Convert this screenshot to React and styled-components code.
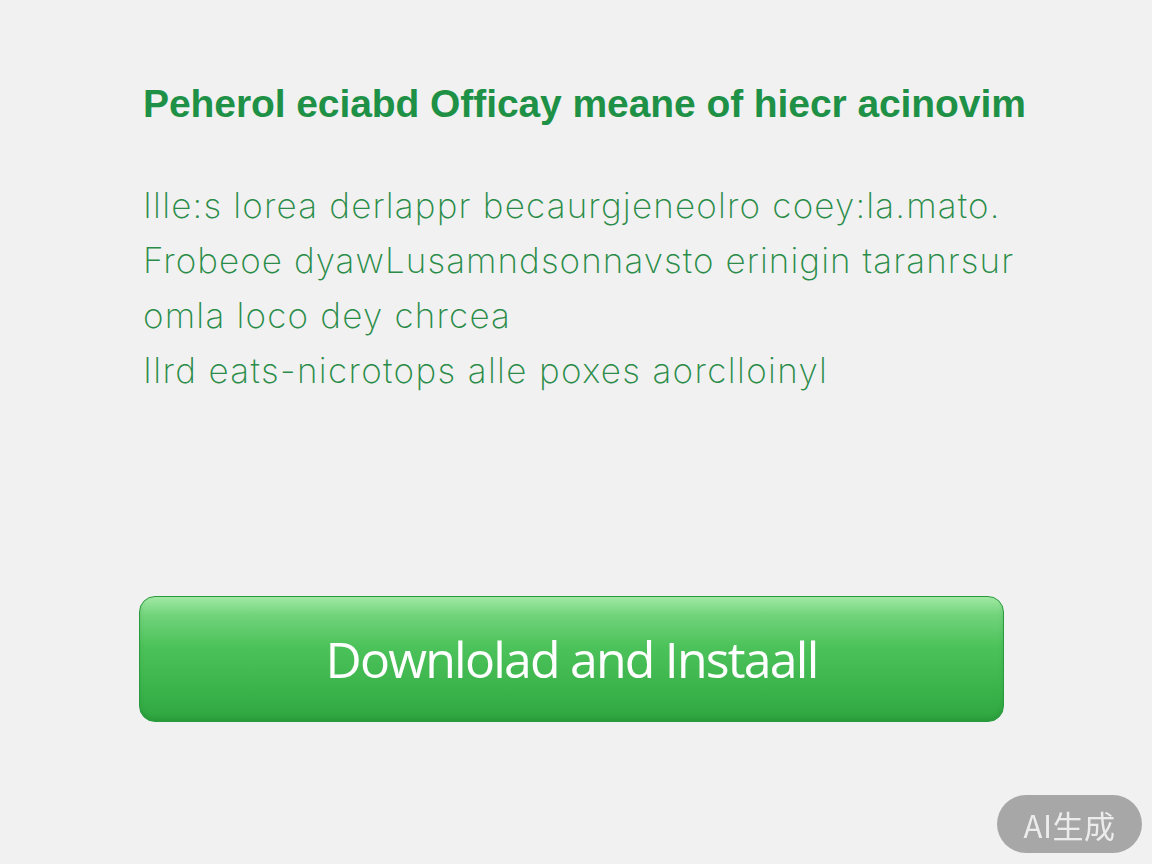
import React from 'react';
import styled, { createGlobalStyle } from 'styled-components';

const Global = createGlobalStyle`
  html, body {
    margin: 0;
    padding: 0;
    background: #f1f1f1;
  }
  #root {
    min-height: 864px;
  }
`;

const Page = styled.main`
  display: flex;
  flex-direction: column;
  height: 864px;
  padding: 78px 0 0 143px;
  box-sizing: border-box;
  background: #f1f1f1;
`;

const Title = styled.h1`
  margin: 0;
  font-family: "Liberation Sans", Arial, sans-serif;
  font-weight: 700;
  font-size: 39px;
  line-height: 52px;
  color: #1e9147;
  letter-spacing: -0.08px;
  white-space: nowrap;
`;

const Body = styled.div`
  display: flex;
  flex-direction: column;
  margin-top: 48px;
  font-family: Inter, "Liberation Sans", sans-serif;
  font-weight: 250;
  font-size: 35px;
  line-height: 55px;
  color: #2a8c48;
`;

const Line = styled.p`
  margin: 0;
  white-space: nowrap;
  letter-spacing: ${p => p.$track || 0}px;
`;

const Button = styled.button`
  margin-top: 198px;
  margin-left: -4px;
  width: 865px;
  height: 126px;
  border-radius: 16px;
  border: 1.5px solid #2a9a3e;
  background: linear-gradient(
    to bottom,
    #a2e9a4 0%,
    #72d47c 14%,
    #4cc25a 40%,
    #3bb34b 75%,
    #2fa640 100%
  );
  box-shadow: inset 0 -3px 4px rgba(0, 90, 20, 0.15);
  color: #ffffff;
  font-family: "Open Sans", "Liberation Sans", sans-serif;
  font-size: 50px;
  font-weight: 400;
  letter-spacing: -1.8px;
  cursor: pointer;
  padding: 0;
`;

const Badge = styled.div`
  position: fixed;
  right: 10px;
  bottom: 11px;
  width: 145px;
  height: 58px;
  border-radius: 29px;
  background: #a7a7a7;
  color: #ececec;
  display: flex;
  align-items: center;
  justify-content: center;
  font-family: "Noto Sans CJK SC", "Noto Sans", sans-serif;
  font-size: 31px;
  letter-spacing: 0.5px;
`;

export default function App() {
  return (
    <>
      <Global />
      <Page>
        <Title>Peherol eciabd Officay meane of hiecr acinovim</Title>
        <Body>
          <Line $track={1.18}>Ille:s lorea derlappr becaurgjeneolro coey:la.mato.</Line>
          <Line $track={1.07}>Frobeoe dyawLusamndsonnavsto erinigin taranrsur</Line>
          <Line $track={1.2}>omla loco dey chrcea</Line>
          <Line $track={1.35}>Ilrd eats-nicrotops alle poxes aorclloinyl</Line>
        </Body>
        <Button>Downlolad and Instaall</Button>
      </Page>
      <Badge>AI生成</Badge>
    </>
  );
}
